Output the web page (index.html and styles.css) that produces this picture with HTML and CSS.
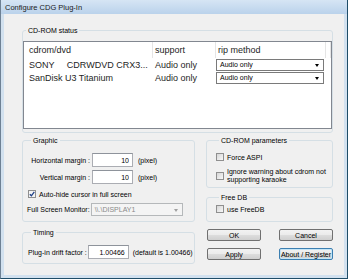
FILE: index.html
```html
<!DOCTYPE html>
<html lang="en">
<head>
    <meta charset="UTF-8">
    <title>Configure CDG Plug-In</title>
    <link rel="stylesheet" href="styles.css">
</head>
<body>

    <div class="window">
        <div class="titlebar">Configure CDG Plug-In</div>

        <div class="client">

            <fieldset class="group status">
                <legend>CD-ROM status</legend>
                <div class="listview">
                    <div class="lv-row lv-head">
                        <div class="col c1">cdrom/dvd</div>
                        <div class="col c2">support</div>
                        <div class="col c3">rip method</div>
                        <div class="col c4"></div>
                    </div>
                    <div class="lv-row">
                        <div class="col c1">SONY     CDRWDVD CRX3...</div>
                        <div class="col c2">Audio only</div>
                        <div class="col c3"><div class="combo">Audio only<span class="arrow"></span></div></div>
                    </div>
                    <div class="lv-row">
                        <div class="col c1">SanDisk U3 Titanium</div>
                        <div class="col c2">Audio only</div>
                        <div class="col c3"><div class="combo">Audio only<span class="arrow"></span></div></div>
                    </div>
                </div>
            </fieldset>

            <div class="column">
                <fieldset class="group graphic">
                    <legend>Graphic</legend>
                    <div class="field first">
                        <label class="field-label">Horizontal margin :</label>
                        <input class="num" type="text" value="10">
                        <span class="unit">(pixel)</span>
                    </div>
                    <div class="field">
                        <label class="field-label">Vertical margin :</label>
                        <input class="num" type="text" value="10">
                        <span class="unit">(pixel)</span>
                    </div>
                    <div class="checkrow autohide">
                        <span class="check checked"></span>
                        <span>Auto-hide cursor in full screen</span>
                    </div>
                    <div class="monitor">
                        <span class="monitor-label">Full Screen Monitor:</span>
                        <div class="combo disabled">\\.\DISPLAY1<span class="arrow"></span></div>
                    </div>
                </fieldset>

                <fieldset class="group timing">
                    <legend>Timing</legend>
                    <div class="drift">
                        <span class="drift-label">Plug-in drift factor :</span>
                        <input class="num drift-input" type="text" value="1.00466">
                        <span class="drift-note">(default is 1.00466)</span>
                    </div>
                </fieldset>
            </div>

            <div class="column">
                <fieldset class="group params">
                    <legend>CD-ROM parameters</legend>
                    <div class="checkrow aspi">
                        <span class="check"></span>
                        <span>Force ASPI</span>
                    </div>
                    <div class="checkrow warning">
                        <span class="check"></span>
                        <span>Ignore warning about cdrom not<br>supporting karaoke</span>
                    </div>
                </fieldset>

                <fieldset class="group freedb">
                    <legend>Free DB</legend>
                    <div class="checkrow usedb">
                        <span class="check"></span>
                        <span>use FreeDB</span>
                    </div>
                </fieldset>

                <div class="buttons">
                    <button type="button">OK</button>
                    <button type="button">Cancel</button>
                    <button type="button">Apply</button>
                    <button type="button" class="focused">About / Register</button>
                </div>
            </div>

        </div>
    </div>

</body>
</html>
```

FILE: styles.css
```css
* { box-sizing: border-box; }
body { margin: 0; background: #fff; font-family: "Liberation Sans", Arial, sans-serif; font-size: 7px; color: #000; }

/* window frame */
.window { width: 348px; height: 279px; display: flex; flex-direction: column; background: #d2e1ef; border-left: 1px solid #6e8194; border-right: 1px solid #1f4d68; border-bottom: 1px solid #1f4d68; }
.titlebar { height: 14px; flex: none; padding: 3px 0 0 4px; font-size: 7.5px; line-height: 9px; color: #1a1a1a; background: linear-gradient(#d6e5f4, #bad2eb); }
.client { flex: 1; margin: 0 3px 3px 3px; background: #f0f0f0; display: grid; grid-template-columns: 173px 127px; column-gap: 11px; row-gap: 3px; align-content: start; padding: 12px 0 0 18px; }
.column { display: flex; flex-direction: column; }

/* group boxes */
.group { margin: 0; padding: 0; border: 1px solid #d5dfe5; border-radius: 3px; min-width: 0; }
.group legend { padding: 0 2px; margin-left: 3px; height: 9px; line-height: 9px; }

/* list view */
.status { grid-column: 1 / 3; padding: 6px 0 3px 0; }
.listview { height: 88px; background: #fff; border: 1px solid #828790; font-size: 9px; color: #1e1e1e; }
.lv-row { display: flex; height: 13px; align-items: center; }
.lv-head { height: 16px; }
.lv-head .col { height: 100%; display: flex; align-items: center; border-right: 1px solid #e5e5e5; }
.col { white-space: pre; }
.c1 { width: 129px; padding-left: 5px; }
.c2 { width: 63px; padding-left: 2px; }
.c3 { width: 110px; }
.lv-head .c3 { padding-left: 2px; }
.c4 { flex: 1; }

/* combos */
.combo { position: relative; width: 108px; height: 12px; line-height: 10px; padding-left: 3px; font-size: 7px; color: #000; background: #fff; border: 1px solid #7a7a7a; }
.combo .arrow { position: absolute; right: 4px; top: 4px; border-left: 2.5px solid transparent; border-right: 2.5px solid transparent; border-top: 3px solid #000; }
.combo.disabled { width: 92px; height: 13px; line-height: 11px; color: #8a8a8a; background: #f4f4f4; border-color: #b5b8ba; }
.combo.disabled .arrow { border-top-color: #a0a0a0; top: 5px; }

/* fields */
.graphic { height: 86px; padding: 0 0 0 5px; }
.field { display: flex; align-items: center; height: 14px; margin-top: 3px; }
.field.first { margin-top: 8px; }
.field-label { width: 62px; text-align: right; }
.num { width: 41px; height: 14px; margin: 0 0 0 2px; padding: 0 3px 0 0; border: 1px solid #abadb3; border-top-color: #8e939b; background: #fff; font: inherit; text-align: right; color: #000; }
.unit { margin-left: 5px; }

.checkrow { display: flex; align-items: center; gap: 3px; }
.check { width: 8px; height: 8px; flex: none; border: 1px solid #8f8f8f; background: linear-gradient(135deg, #d6d6d6, #f8f8f8); }
.check.checked { background: #f4f4f4 url("data:image/svg+xml,%3Csvg xmlns='http://www.w3.org/2000/svg' viewBox='0 0 6 6'%3E%3Cpath d='M0.8 3.2 L2.4 4.8 L5.3 0.9' fill='none' stroke='%231d3e86' stroke-width='1.3'/%3E%3C/svg%3E") center / 6px 6px no-repeat; }
.autohide { height: 12px; margin-top: 4px; }

.monitor { display: flex; align-items: center; gap: 1px; margin: 3px 0 0 -1px; white-space: nowrap; }

.timing { margin-top: 6px; padding: 0 0 4px 5px; }
.drift { display: flex; align-items: center; margin-top: 8px; white-space: nowrap; }
.drift span { flex: none; }
.drift-input { width: 41px; margin-left: 1px; flex: none; }
.drift-note { margin-left: 4px; }

/* right column */
.params { padding: 0 0 3px 9px; }
.aspi { height: 10px; margin-top: 7px; }
.warning { margin-top: 6px; line-height: 8px; }
.freedb { margin-top: 5px; padding: 0 0 7px 9px; }
.usedb { height: 10px; margin-top: 2px; }

.buttons { display: grid; grid-template-columns: 54px 54px; column-gap: 18px; row-gap: 7px; margin: 7px 0 0 1px; }
.buttons button { height: 12px; padding: 0; font: inherit; color: #000; border: 1px solid #707070; border-radius: 2px; background: linear-gradient(#f2f2f2 0%, #ebebeb 50%, #dddddd 51%, #cfcfcf 100%); }
.buttons button.focused { border-color: #3c7fb1; box-shadow: inset 0 0 0 1px #c4e5f6; }
```
